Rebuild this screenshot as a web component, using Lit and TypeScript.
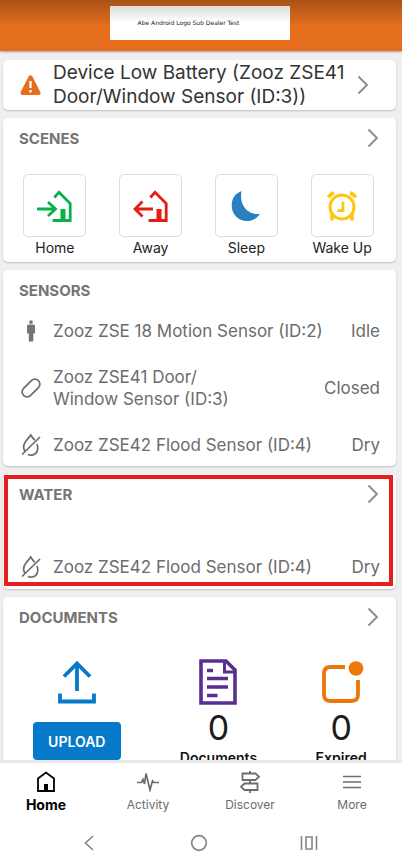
import { LitElement, html, css, svg, nothing } from "lit";
import { customElement, property } from "lit/decorators.js";

const chevron = html`<svg class="chevron" viewBox="0 0 12 20" width="12" height="20" aria-hidden="true"><path d="M1.500 1.500 10 10 1.500 18.500" fill="none" stroke="#8a8a8a" stroke-width="1.800"/></svg>`;

const house = svg`<path d="M17.300 8.500 22 3.200 33.200 14.500V31.500H15.500" fill="none" stroke="currentColor" stroke-width="2.800"/><path d="M23.500 20h5v11.500h-5Z" fill="currentColor"/>`;

const sceneIcons: Record<string, unknown> = {
  home: html`<svg viewBox="0 0 36 34" width="36" height="34" style="color:#0bb04b"><g>${house}</g><path d="M0 20H18M11 13 18.500 20 11 27" fill="none" stroke="currentColor" stroke-width="2.800"/></svg>`,
  away: html`<svg viewBox="0 0 36 34" width="36" height="34" style="color:#e81c10"><g>${house}</g><path d="M20 20H2M9.500 12.500 2 20 9.500 27.500" fill="none" stroke="currentColor" stroke-width="2.800"/></svg>`,
  sleep: html`<svg viewBox="0 0 30 32" width="30" height="32"><path d="M10.500 1C3 4 .3 10 .8 17c.7 8 7 14 15.200 14 5.500 0 10-2.500 13-7.200C19.500 25.500 7.500 18 10.500 1Z" fill="#2980c0"/></svg>`,
  wake: html`<svg viewBox="0 0 32 30" width="32" height="30"><g fill="none" stroke="#fcc70e"><circle cx="16" cy="16" r="12" stroke-width="3"/><path d="M2.500 6.500Q4 3 8 2M29.500 6.500Q28 3 24 2" stroke-width="3.600"/><path d="M6 22v7.500M26 22v7.500" stroke-width="3.500"/><path d="M17 10.500v9.200h-5.500" stroke-width="2.800"/></g></svg>`,
};

const drop = html`<svg viewBox="0 0 20 24" width="20" height="24"><g fill="none" stroke="#6c6c6c" stroke-width="1.700"><path d="M4.300 18.200C1.500 15 2.300 11.500 5 8 7 5.300 8.500 4 9.700 2c1.200 2 2.500 3.300 4 5.300M16 11c2.200 6-.5 11-6 11.200-1.300 0-2.200-.2-3.200-.7"/><path d="M1 21.500 19 4"/></g></svg>`;

const sensorIcons: Record<string, unknown> = {
  motion: html`<svg viewBox="0 0 10 22" width="10" height="22"><g fill="#757575"><circle cx="5" cy="2.100" r="1.900"/><path d="M2.500 4.500h5Q9 4.500 9 6v7.500H7.300V21.500H2.800V13.500H1V6Q1 4.500 2.500 4.500Z"/></g></svg>`,
  contact: html`<svg viewBox="0 0 20 20" width="20" height="20"><rect x="-.5" y="5" width="21" height="10" rx="5" transform="rotate(-45 10 10)" fill="none" stroke="#6c6c6c" stroke-width="1.700"/></svg>`,
  flood: drop,
};

const navIcons: Record<string, unknown> = {
  home: html`<svg viewBox="0 0 20 22" width="20" height="22"><path d="M2 20V7.500L10 1.500 18 7.500V20Z" fill="none" stroke="#000" stroke-width="1.800"/><path d="M8 13h4v7H8Z"/></svg>`,
  activity: html`<svg viewBox="0 0 22 20" width="22" height="20"><path d="M0 10.500h4.500L6 7.500 7.500 12 9 1.500 13 18 15.500 9 17 10.500H22" fill="none" stroke="#6c6c6c" stroke-width="1.700"/></svg>`,
  discover: html`<svg viewBox="0 0 20 22" width="20" height="22"><path d="M10 0v2.500M10 9v3.500M10 19v3M2.500 2.500H15.500l3.500 3.200-3.500 3.300H2.500ZM17.500 12.500H4.500L1 15.800l3.500 3.200h13Z" fill="none" stroke="#6c6c6c" stroke-width="1.800"/></svg>`,
  more: html`<svg viewBox="0 0 18 14" width="18" height="14"><path d="M0 1.500h18M0 7h18M0 12.500h18" stroke="#6c6c6c" stroke-width="1.700"/></svg>`,
};

@customElement("sensor-row")
class SensorRow extends LitElement {
  @property() icon = "flood";
  @property() state = "";

  static styles = css`
    :host { display: flex; align-items: center; line-height: 22px; font-size: 17px; color: #6c6c6c; }
    .icon { flex: none; width: 24px; height: 22px; display: flex; align-items: center; justify-content: center; margin-right: 10px; }
    .icon svg { flex: none; }
    .name { flex: 1; }
  `;

  render() {
    return html`<span class="icon">${sensorIcons[this.icon]}</span><span class="name"><slot></slot></span><span>${this.state}</span>`;
  }
}

@customElement("app-card")
class AppCard extends LitElement {
  @property() heading = "";
  @property({ type: Boolean }) link = false;

  static styles = css`
    :host { display: block; background: #fff; border-radius: 5px; box-shadow: 0 1px 2px #0003; padding: 10px 0; position: relative; }
    .head { display: flex; align-items: center; justify-content: space-between; height: 20px; padding: 0 16px; }
    .title { margin: 2px 0 0; font-size: 15px; line-height: 20px; font-weight: 700; color: #757575; }
    .open { border: 0; padding: 0; margin-right: 1px; background: none; display: flex; }
  `;

  render() {
    return html`
      <div class="head">
        <h2 class="title">${this.heading}</h2>
        ${this.link ? html`<button class="open" aria-label=${`Open ${this.heading}`}>${chevron}</button>` : nothing}
      </div>
      <slot></slot>`;
  }
}

@customElement("app-root")
class AppRoot extends LitElement {
  static styles = css`
    :host { display: flex; flex-direction: column; height: 100vh; background: #efefef; color: #222; font-family: Inter, "Noto Sans", sans-serif; font-size: 14px; }
    button { font: inherit; color: inherit; background: none; border: 0; padding: 0; }
    .top { flex: none; display: flex; justify-content: center; padding: 6px 3px 11px 0; background: linear-gradient(#a95218, #e46e1b 26px); box-shadow: 0 1px 2px #0005; }
    .logo { width: 180px; height: 34px; box-sizing: border-box; padding-right: 22px; display: flex; align-items: center; justify-content: center; background: linear-gradient(#dcdcdc, #fff 16px); color: #222; font: 6px/8px "DejaVu Sans", sans-serif; }
    .content { flex: 1; min-height: 0; overflow: hidden; display: flex; flex-direction: column; gap: 8px; padding: 9px 6px 0 3px; }
    .content > * { flex: none; }
    .alert { display: flex; align-items: center; text-align: left; background: #fff; border-radius: 5px; box-shadow: 0 1px 2px #0003; padding: 1px 27px 1px 17px; font-size: 19px; line-height: 24px; color: #333; }
    .alert svg { flex: none; }
    .alert .text { flex: 1; margin-left: 12px; }
    .scenes { display: grid; grid-template-columns: repeat(4, 1fr); padding: 26px 6px 0 4px; margin-bottom: -6px; }
    .scene { display: flex; flex-direction: column; align-items: center; line-height: 20px; color: #222; }
    .tile { width: 61px; height: 61px; border: 1px solid #ddd; border-radius: 5px; display: flex; align-items: center; justify-content: center; margin-bottom: 1px; }
    .rows { display: flex; flex-direction: column; gap: 24px; padding: 20px 16px 0; }
    .rows.low { padding: 52px 16px 1px; }
    .marker { position: absolute; inset: 1px 3px 3px 1px; border: 4px solid #e61e1e; pointer-events: none; }
    .docs { display: grid; grid-template-columns: 148fr 136fr 110fr; padding-top: 31px; }
    .doc { display: flex; flex-direction: column; align-items: center; }
    .doc .pic { height: 48px; display: flex; align-items: center; }
    .upload { width: 88px; height: 38px; margin-top: 16px; border-radius: 4px; background: #067aca; color: #fff; font-size: 14px; font-weight: 600; }
    .count { font-size: 34px; line-height: 40px; margin-top: 2px; color: #1c1c1c; }
    .count-label { font-weight: 600; line-height: 20px; color: #111; }
    .bottom { flex: none; background: #fff; border-top: 3px solid #e9e9e9; }
    .tabs { display: flex; justify-content: space-between; padding: 7px 20px 0 16px; }
    .tab { width: 60px; display: flex; flex-direction: column; align-items: center; color: #6c6c6c; font-size: 12px; line-height: 16px; gap: 3px; text-decoration: none; }
    .tab .pic { height: 24px; display: flex; align-items: center; }
    .tab.on { color: #000; font-weight: 700; font-size: 14px; }
    .system { display: flex; justify-content: center; gap: 86px; padding: 18px 4px 9px 0; }
    .system button { width: 24px; height: 24px; display: flex; align-items: center; justify-content: center; }
  `;

  private scenes = [["home", "Home"], ["away", "Away"], ["sleep", "Sleep"], ["wake", "Wake Up"]];
  private tabs = [["home", "Home"], ["activity", "Activity"], ["discover", "Discover"], ["more", "More"]];

  render() {
    return html`
      <header class="top"><div class="logo">Abe Android Logo Sub Dealer Test</div></header>
      <main class="content">
        <button class="alert">
          <svg viewBox="0 0 21 20" width="21" height="20"><path d="M8.600 1.500Q10.500-1.200 12.400 1.500L20.300 17Q21 20 18.500 20H2.500Q0 20 .7 17Z" fill="#e46e1b"/><path d="M10.500 6v7M10.500 15v2.500" stroke="#fff" stroke-width="2.300"/></svg>
          <span class="text">Device Low Battery (Zooz ZSE41 Door/Window Sensor (ID:3))</span>
          ${chevron}
        </button>
        <app-card heading="SCENES" link>
          <div class="scenes">
            ${this.scenes.map(([id, label]) => html`<button class="scene"><span class="tile">${sceneIcons[id]}</span>${label}</button>`)}
          </div>
        </app-card>
        <app-card heading="SENSORS">
          <div class="rows">
            <sensor-row icon="motion" state="Idle">Zooz ZSE 18 Motion Sensor (ID:2)</sensor-row>
            <sensor-row icon="contact" state="Closed">Zooz ZSE41 Door/<br>Window Sensor (ID:3)</sensor-row>
            <sensor-row icon="flood" state="Dry">Zooz ZSE42 Flood Sensor (ID:4)</sensor-row>
          </div>
        </app-card>
        <app-card heading="WATER" link>
          <div class="rows low">
            <sensor-row icon="flood" state="Dry">Zooz ZSE42 Flood Sensor (ID:4)</sensor-row>
          </div>
          <div class="marker"></div>
        </app-card>
        <app-card heading="DOCUMENTS" link>
          <div class="docs">
            <div class="doc">
              <span class="pic"><svg viewBox="0 0 38 44" width="38" height="44"><path d="M19 31V3.500M6 16.500 19 3.500 32 16.500M2 33.500v8H36V33.500" fill="none" stroke="#067aca" stroke-width="3.800"/></svg></span>
              <button class="upload">UPLOAD</button>
            </div>
            <div class="doc">
              <span class="pic"><svg viewBox="0 0 38 46" width="38" height="46"><g fill="none" stroke="#5a2d91"><path d="M2 2H27L36 11V44H2Z" stroke-width="3.600"/><path d="M25.500 2V13H36" stroke-width="3"/><path d="M8 11.500h6M8 19.500h21M8 28h21M8 36.500h10.500" stroke-width="3.600"/></g></svg></span>
              <span class="count">0</span>
              <span class="count-label">Documents</span>
            </div>
            <div class="doc">
              <span class="pic"><svg viewBox="-4 0 46 42" width="46" height="42"><path d="M23 6H8.500Q2 6 2 12.500V33.500Q2 40 8.500 40H29.500Q36 40 36 33.500V19" fill="none" stroke="#ee770d" stroke-width="3.800"/><circle cx="34" cy="7.500" r="7.300" fill="#ee770d"/></svg></span>
              <span class="count">0</span>
              <span class="count-label">Expired</span>
            </div>
          </div>
        </app-card>
      </main>
      <footer class="bottom">
        <nav class="tabs">
          ${this.tabs.map(([id, label]) => html`<a class="tab ${id === "home" ? "on" : ""}" href="#${id}"><span class="pic">${navIcons[id]}</span>${label}</a>`)}
        </nav>
        <div class="system">
          <button aria-label="Back"><svg viewBox="0 0 10 16" width="10" height="16"><path d="M9 1 1.500 8 9 15" fill="none" stroke="#858585" stroke-width="1.600"/></svg></button>
          <button aria-label="Home screen"><svg viewBox="0 0 18 18" width="18" height="18"><circle cx="9" cy="9" r="7.300" fill="none" stroke="#858585" stroke-width="1.700"/></svg></button>
          <button aria-label="Recent apps"><svg viewBox="0 0 18 16" width="18" height="16"><path d="M1.500 1v14M16.500 1v14M6 2h6v12H6Z" fill="none" stroke="#858585" stroke-width="1.600"/></svg></button>
        </div>
      </footer>`;
  }
}
